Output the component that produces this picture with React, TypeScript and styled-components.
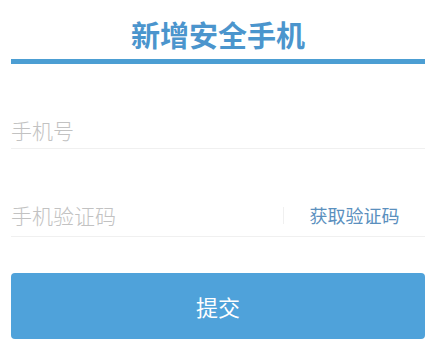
import React from 'react';
import styled, { createGlobalStyle } from 'styled-components';

const GlobalStyle = createGlobalStyle`
  html, body {
    margin: 0;
    padding: 0;
    background: #fff;
  }
  body {
    font-family: "Noto Sans CJK SC", "Noto Sans", sans-serif;
  }
  input::placeholder {
    color: #c2c2c2;
  }
`;

const Page = styled.div`
  width: 439px;
  padding: 0 14px 0 11px;
  box-sizing: border-box;
`;

const Header = styled.div`
  padding-top: 14px;
  border-bottom: 5px solid #4c9ed3;
  padding-bottom: 5px;
`;

const Title = styled.h1`
  margin: 0;
  text-align: center;
  font-size: 29px;
  line-height: 40px;
  font-weight: 700;
  color: #4b95cd;
`;

const Field = styled.div<{ $top: number; $lift?: number }>`
  display: flex;
  align-items: center;
  height: 36px;
  margin-top: ${p => p.$top}px;
  padding-bottom: ${p => p.$lift ?? 0}px;
  border-bottom: 1px solid #f0f0f0;
`;

const Input = styled.input`
  flex: 1;
  min-width: 0;
  border: none;
  outline: none;
  padding: 0;
  font-family: inherit;
  font-size: 21px;
  font-weight: 300;
  color: #333;
  background: transparent;
`;

const CodeButton = styled.button`
  flex: 0 0 142px;
  height: 17px;
  padding: 0;
  border: none;
  border-left: 1px solid #f0f0f0;
  background: transparent;
  font-family: inherit;
  font-size: 18px;
  line-height: 17px;
  color: #5b90be;
  cursor: pointer;
  display: flex;
  align-items: center;
  justify-content: center;
`;

const Submit = styled.button`
  display: block;
  width: 100%;
  height: 66px;
  margin-top: 36px;
  border: none;
  border-radius: 4px;
  background: #4fa2da;
  color: #fff;
  font-family: inherit;
  font-size: 22px;
  cursor: pointer;
`;

export default function App() {
  return (
    <>
      <GlobalStyle />
      <Page>
        <Header>
          <Title>新增安全手机</Title>
        </Header>
        <Field $top={48}>
          <Input placeholder="手机号" />
        </Field>
        <Field $top={48} $lift={3}>
          <Input placeholder="手机验证码" />
          <CodeButton>获取验证码</CodeButton>
        </Field>
        <Submit>提交</Submit>
      </Page>
    </>
  );
}
